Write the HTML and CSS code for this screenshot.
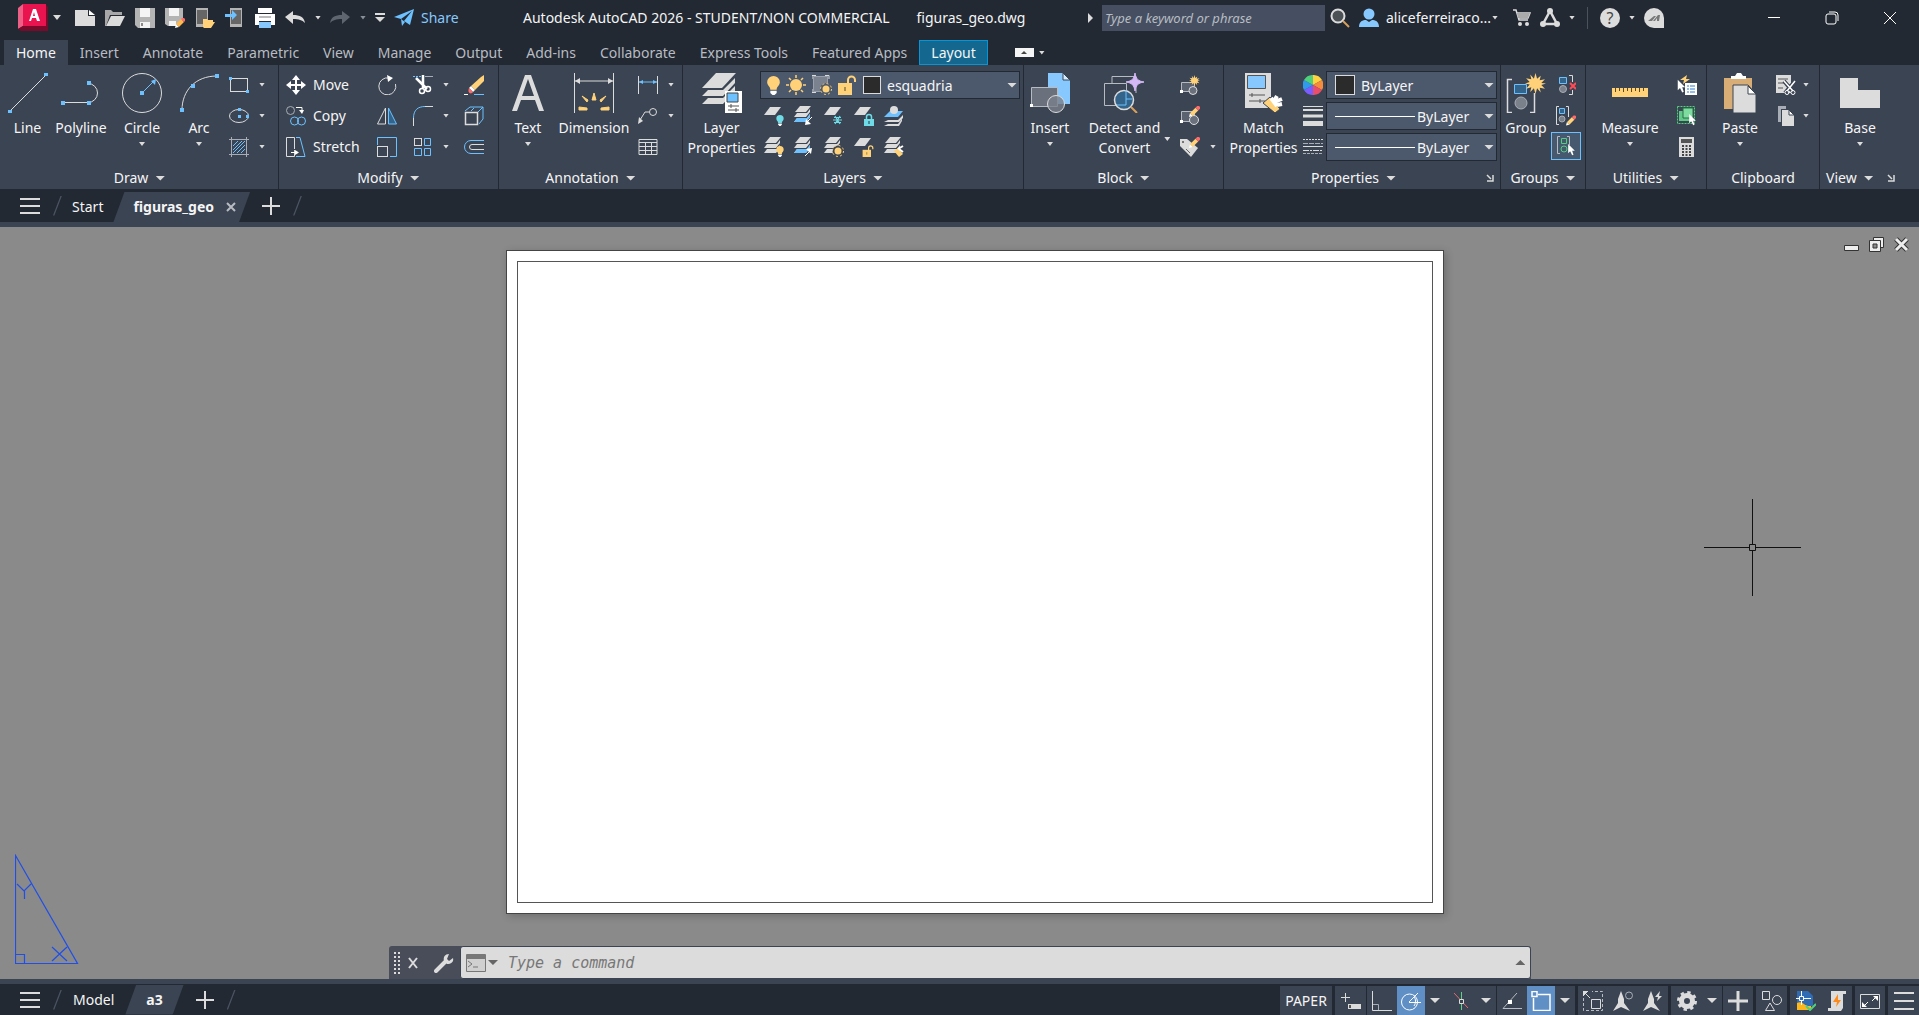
FILE: index.html
```html
<!DOCTYPE html>
<html lang="en">
<head>
    <meta charset="UTF-8">
    <meta name="viewport" content="width=device-width, initial-scale=1.0">
    <title>Autodesk AutoCAD 2026 - figuras_geo.dwg</title>
    <link rel="stylesheet" href="styles.css">
</head>
<body>
    <!-- Shared icon parts -->
    <svg class="sprite" width="0" height="0">
        <symbol id="sheet" viewBox="0 0 20 20"><path d="M6 1H17L11 9H0Z" fill="#dcdcdc"/></symbol>
        <symbol id="stack" viewBox="0 0 20 20">
            <path d="M6 0H17L12 6H1Z" fill="#dcdcdc"/>
            <path d="M3 7H13L16 3V6L12 11H0ZM3 12H13L16 8V11L12 16H0Z" fill="#dcdcdc"/>
        </symbol>
        <symbol id="bulb" viewBox="0 0 12 18">
            <path d="M6 0a6 6 0 0 1 6 6c0 3-3 4-3 7H3c0-3-3-4-3-7a6 6 0 0 1 6-6Z"/>
            <path d="M3 14h6v2l-2 2H5l-2-2Z" fill="#fff"/>
        </symbol>
        <symbol id="sun" viewBox="0 0 20 20">
            <circle cx="10" cy="10" r="6"/>
            <path d="M10 0v3M10 17v3M0 10h3M17 10h3M3 3l2 2M15 15l2 2M17 3l-2 2M5 15l-2 2" stroke="#ffd27a" stroke-width="1.5"/>
        </symbol>
        <symbol id="cursor" viewBox="0 0 12 18"><path d="M1 0v14l3-3 3 6 2-1-2-6h4Z" fill="#fff"/></symbol>
        <symbol id="pencil" viewBox="0 0 12 12"><path d="M0 12l1-4 3 3Z" fill="#fff"/><path d="M1 8l6-6 3 3-6 6Z" fill="#ffd27a"/><path d="M7 2l2-2h2l1 1v2l-2 2Z" fill="#ff6b6b"/></symbol>
        <symbol id="burst" viewBox="0 0 20 20"><path d="M10 0l1.500 5.500L15 2.500l-1 4.500 5-1-3.500 3.500L20 10l-4.500 1.500L19 15l-5-1 1 4.500-3.500-4L10 20l-1.500-5.500L5 18l1-4.500L1 15l3.500-4L0 10l4.500-1.500L1 5l5 1-1-4.500L8.500 5.500Z" fill="#ffd27a"/></symbol>
        <symbol id="openlock" viewBox="0 0 18 20"><path d="M10 9V5a3.500 3.500 0 0 1 7 0v2" fill="none" stroke="#ffd27a" stroke-width="2"/><path d="M0 8h14v12H0Z" fill="#ffd27a"/><path d="M7 12v4" stroke="#5a4a20" stroke-width="1"/></symbol>
        <symbol id="launcher" viewBox="0 0 8 8"><path d="M1 1l4 4M7 1v6H1" fill="none" stroke="#dcdcdc" stroke-width="1.500"/></symbol>
    </svg>

    <header class="titlebar">
        <button class="app-menu" aria-label="Application menu">
            <svg width="30" height="28" viewBox="0 0 30 28">
                <path d="M0 4L5 0V22L0 25Z" fill="#ec5f86"/><path d="M5 0H28V22H5Z" fill="#e8134f"/><path d="M0 25L5 22H28V1L30 3V27H3Z" fill="#7a0a2b"/>
                <path d="M11 17L15 5h3l4 12h-3l-1-3h-4l-1 3Zm4-5h2l-1-4Z" fill="#fff"/>
            </svg>
            <span class="caret caret-md"></span>
        </button>
        <div class="quick-access">
            <button aria-label="New"><svg class="icon" viewBox="0 0 20 20"><path d="M0 2H13V8H20V18H0Z" fill="#dcdcdc"/><path d="M14 2l6 5h-6Z" fill="#fff"/></svg></button>
            <button aria-label="Open"><svg class="icon" viewBox="0 0 20 20"><path d="M0 18V2h6l2 2h9v3H5L1 18Z" fill="#a8a8a8"/><path d="M6 8h14l-5 10H1Z" fill="#dcdcdc"/></svg></button>
            <button aria-label="Save"><svg class="icon" viewBox="0 0 20 20"><path d="M0 0h20v20H3l-3-3Z" fill="#b4b4b4"/><path d="M5 0h10v9H5ZM5 14h10v6H5Z" fill="#f4f4f4"/><path d="M7 15v3" stroke="#222" stroke-width="1"/></svg></button>
            <button aria-label="Save as"><svg class="icon" viewBox="0 0 20 20"><path d="M0 0h18v12l-6 6H3l-3-2Z" fill="#b4b4b4"/><path d="M4 0h10v8H4ZM4 13h7v5H4Z" fill="#f4f4f4"/><path d="M10 20l1-4 3 3Z" fill="#fff"/><path d="M11 16l5-5 3 3-5 5Z" fill="#ffb84d"/><path d="M16 11l1-1h2l1 1v2l-1 1Z" fill="#ff6b6b"/></svg></button>
            <button aria-label="Open from web and mobile"><svg class="icon" viewBox="0 0 20 20"><path d="M1 0h12v19H1Z" fill="#b4b4b4"/><path d="M2 2h10v14H2Z" fill="#666"/><path d="M8 19v-8h4l1 1h5v2l2 0-4 6H9Z" fill="#ffd27a"/></svg></button>
            <button aria-label="Save to web and mobile"><svg class="icon" viewBox="0 0 20 20"><path d="M5 0h12v19H5Z" fill="#b4b4b4"/><path d="M6 2h10v14H6Z" fill="#666"/><path d="M0 6h7V2l5 5-5 5V9H0Z" fill="#6dc1ff"/></svg></button>
            <button aria-label="Plot"><svg class="icon" viewBox="0 0 20 20"><path d="M3 0h14v5H3ZM0 6h20v11h-4v-4H4v4H0Z" fill="#fff"/><path d="M4 8h12v2H4Z" fill="#bbb"/><path d="M4 14h12v6H4Z" fill="#87c9ff"/></svg></button>
            <button aria-label="Undo"><svg class="icon" viewBox="0 0 20 20"><path d="M0 9l8-6v4c7 0 11 2 12 8-3-3-6-4-12-4v5Z" fill="#dcdcdc"/></svg></button>
            <span class="caret"></span>
            <button aria-label="Redo"><svg class="icon" viewBox="0 0 20 20"><path d="M20 9l-8-6v4C5 7 1 9 0 15c3-3 6-4 12-4v5Z" fill="#5f656e"/></svg></button>
            <span class="caret caret-dim"></span>
            <button aria-label="Customize"><svg width="10" height="10" viewBox="0 0 10 10"><path d="M0 1h10" stroke="#dcdcdc" stroke-width="2"/><path d="M0 4h10L5 9Z" fill="#dcdcdc"/></svg></button>
        </div>
        <button class="share">
            <svg class="icon" viewBox="0 0 20 20"><path d="M0 9L20 1 16 17 10 13 18 3 7 11Z" fill="#6dc1ff"/><path d="M7 11l1 7 3-4Z" fill="#6dc1ff"/></svg>
            Share
        </button>
        <div class="doc-title"><span>Autodesk AutoCAD 2026 - STUDENT/NON COMMERCIAL</span><span>figuras_geo.dwg</span></div>
        <div class="info-center">
            <svg width="5" height="10" viewBox="0 0 5 10"><path d="M0 0l5 5-5 5Z" fill="#dcdcdc"/></svg>
            <form class="search">
                <input type="text" aria-label="Search" placeholder="Type a keyword or phrase">
                <button type="button" aria-label="Find"><svg class="icon" viewBox="0 0 20 20"><circle cx="8" cy="8" r="6.500" fill="#4c5156" stroke="#dcdcdc" stroke-width="2"/><path d="M13 13l6 6" stroke="#d9a05a" stroke-width="2"/></svg></button>
            </form>
            <button class="account"><svg class="icon" viewBox="0 0 20 20"><circle cx="10" cy="6" r="5.500" fill="#87c9ff"/><path d="M0 19c0-6 4-7 7-7l3 2 3-2c3 0 7 1 7 7Z" fill="#87c9ff"/></svg><span>aliceferreiraco...</span><span class="caret"></span></button>
            <button aria-label="App Store"><svg width="18" height="18" viewBox="0 0 18 18"><path d="M0 1h3l3 10h9M4 4h13l-2 5H6" fill="none" stroke="#dcdcdc" stroke-width="1.500"/><path d="M4 4h13l-2 5H5Z" fill="#aaa"/><circle cx="7" cy="15" r="2" fill="#dcdcdc"/><circle cx="14" cy="15" r="2" fill="#dcdcdc"/></svg></button>
            <button class="with-caret" aria-label="Autodesk App"><svg class="icon" viewBox="0 0 20 20"><path d="M10 3L3 16H17Z" fill="none" stroke="#dcdcdc" stroke-width="2.500"/><circle cx="10" cy="3" r="3" fill="#dcdcdc"/><circle cx="3" cy="16" r="3" fill="#dcdcdc"/><circle cx="17" cy="16" r="3" fill="#dcdcdc"/></svg><span class="caret"></span></button>
            <span class="vline"></span>
            <button class="with-caret" aria-label="Help"><span class="help">?</span><span class="caret"></span></button>
            <button aria-label="Assistant"><svg class="icon" viewBox="0 0 20 20"><path d="M10 0a10 10 0 0 1 10 10V20H10A10 10 0 0 1 10 0Z" fill="#dcdcdc"/><path d="M4 13l6-5h2l-4 5ZM9 13l5-6h2l-1 6h-2v-3l-2 3Z" fill="#777"/></svg></button>
        </div>
        <div class="window-buttons">
            <button aria-label="Minimize"><svg width="14" height="14" viewBox="0 0 14 14"><path d="M1 6.500h12" stroke="#fff"/></svg></button>
            <button aria-label="Restore"><svg width="14" height="14" viewBox="0 0 14 14"><rect x="1" y="3" width="10" height="10" rx="2" fill="none" stroke="#fff"/><path d="M4 1h6a3 3 0 0 1 3 3v6" fill="none" stroke="#fff"/></svg></button>
            <button aria-label="Close"><svg width="14" height="14" viewBox="0 0 14 14"><path d="M1 1l12 12M13 1L1 13" stroke="#fff"/></svg></button>
        </div>
    </header>

    <nav class="ribbon-tabs">
        <button class="active">Home</button>
        <button>Insert</button>
        <button>Annotate</button>
        <button>Parametric</button>
        <button>View</button>
        <button>Manage</button>
        <button>Output</button>
        <button>Add-ins</button>
        <button>Collaborate</button>
        <button>Express Tools</button>
        <button>Featured Apps</button>
        <button class="contextual">Layout</button>
        <button class="ribbon-min" aria-label="Minimize ribbon"><svg width="19" height="9" viewBox="0 0 19 9"><path d="M0 0h19v9H0Z" fill="#f5f5f5"/><path d="M6 6l3-3 3 3Z" fill="#444"/></svg><span class="caret"></span></button>
    </nav>

    <main class="ribbon">
        <section class="panel draw">
            <div class="panel-body">
                <button class="big"><svg viewBox="0 0 40 40"><path d="M2 38L38 2" stroke="#dcdcdc"/><path d="M0 37h4v3H0ZM36 0h4v3h-4Z" fill="#6dc1ff"/></svg>Line</button>
                <button class="big"><svg viewBox="0 0 40 40"><path d="M2 29.500H27a9.500 9.500 0 0 0 0-19" fill="none" stroke="#dcdcdc"/><path d="M0 28h4v4H0ZM26 28h4v4h-4ZM26 8h4v4h-4Z" fill="#6dc1ff"/></svg>Polyline</button>
                <button class="big"><svg viewBox="0 0 40 40"><circle cx="20" cy="20" r="19.500" fill="none" stroke="#dcdcdc"/><path d="M20 20L32 8" stroke="#6dc1ff"/><path d="M18 18h4v4h-4ZM34 6l-1 6-4-4Z" fill="#6dc1ff"/></svg>Circle<span class="caret"></span></button>
                <button class="big"><svg viewBox="0 0 40 40"><path d="M3 37C3 18 16 3 38 3" fill="none" stroke="#dcdcdc"/><path d="M1 35h4v4H1ZM12 11h4v4h-4ZM36 1h4v4h-4Z" fill="#6dc1ff"/></svg>Arc<span class="caret"></span></button>
                <div class="rows">
                    <button class="tool" aria-label="Rectangle"><svg class="icon" viewBox="0 0 20 20"><rect x="1.500" y="3.500" width="17" height="13" fill="none" stroke="#dcdcdc"/><path d="M0 2h3v3H0ZM17 15h3v3h-3Z" fill="#6dc1ff"/></svg><span class="caret"></span></button>
                    <button class="tool" aria-label="Ellipse"><svg class="icon" viewBox="0 0 20 20"><ellipse cx="10" cy="10" rx="9.500" ry="6.500" fill="none" stroke="#dcdcdc"/><path d="M9 2h3v3H9ZM9 9h3v3H9ZM17 9h3v3h-3Z" fill="#6dc1ff"/></svg><span class="caret"></span></button>
                    <button class="tool" aria-label="Hatch"><svg class="icon" viewBox="0 0 20 20"><path d="M2.500 0v20M17.500 0v20M0 2.500h20M0 17.500h20" stroke="#a9aeb6"/><path d="M4 9l5-5M4 13l9-9M4 16L16 4M8 16l8-8M12 16l4-4" stroke="#6dc1ff"/></svg><span class="caret"></span></button>
                </div>
            </div>
            <h2>Draw <span class="caret caret-lg"></span></h2>
        </section>

        <section class="panel modify">
            <div class="panel-body">
                <div class="rows">
                    <button class="tool"><svg class="icon" viewBox="0 0 20 20"><path d="M10 0l4 5h-3v4h4V6l5 4-5 4v-3h-4v4h3l-4 5-4-5h3v-4H5v3L0 10l5-4v3h4V5H6Z" fill="#fff"/></svg>Move</button>
                    <button class="tool"><svg class="icon" viewBox="0 0 20 20"><circle cx="4.500" cy="4.500" r="4" fill="none" stroke="#a9aeb6"/><path d="M10 1.500h6V6" fill="none" stroke="#fff"/><path d="M13 4h5l-2 4Z" fill="#fff"/><circle cx="8.500" cy="15" r="4" fill="none" stroke="#6dc1ff"/><circle cx="15.500" cy="15" r="4" fill="none" stroke="#6dc1ff"/></svg>Copy</button>
                    <button class="tool"><svg class="icon" viewBox="0 0 20 20"><path d="M8.500 13v6.500h-8V.5h8V12" fill="none" stroke="#dcdcdc"/><path d="M10 .5h4L19 19.500H10" fill="none" stroke="#6dc1ff"/><path d="M5 15.500h6" stroke="#fff"/><path d="M9 13l4 2.500L9 18Z" fill="#fff"/></svg>Stretch</button>
                </div>
                <div class="rows">
                    <button class="tool" aria-label="Rotate"><svg class="icon" viewBox="0 0 20 20"><path d="M12 3A8.500 8.500 0 1 0 18.500 9" fill="none" stroke="#dcdcdc"/><path d="M10 0l6 3-5 4Z" fill="#fff"/></svg></button>
                    <button class="tool" aria-label="Mirror"><svg class="icon" viewBox="0 0 20 20"><path d="M8.500 2v16H.5Z" fill="none" stroke="#dcdcdc"/><path d="M11.500 2v16h8Z" fill="#35648a" stroke="#6dc1ff"/></svg></button>
                    <button class="tool" aria-label="Scale"><svg class="icon" viewBox="0 0 20 20"><path d="M.5 8V.5h19v19H13" fill="none" stroke="#6dc1ff"/><rect x=".5" y="9.500" width="10" height="10" fill="none" stroke="#dcdcdc"/></svg></button>
                </div>
                <div class="rows">
                    <button class="tool" aria-label="Trim"><svg class="icon" viewBox="0 0 20 20"><path d="M0 1.500h9" stroke="#6dc1ff" stroke-dasharray="2 1"/><path d="M12 1.500h8" stroke="#a9aeb6"/><path d="M3 3l11 11M10 0v13" stroke="#fff" stroke-width="2.500"/><circle cx="9" cy="16" r="2.500" fill="none" stroke="#fff" stroke-width="1.500"/><circle cx="15" cy="14" r="2.500" fill="none" stroke="#fff" stroke-width="1.500"/></svg><span class="caret"></span></button>
                    <button class="tool" aria-label="Fillet"><svg class="icon" viewBox="0 0 20 20"><path d="M.5 20v-8M12 .5h8" stroke="#dcdcdc"/><path d="M.5 12C.5 4 5 .5 12 .5" fill="none" stroke="#6dc1ff"/></svg><span class="caret"></span></button>
                    <button class="tool" aria-label="Array"><svg class="icon" viewBox="0 0 20 20"><rect x="1.500" y="1.500" width="7" height="7" fill="none" stroke="#dcdcdc"/><path d="M11.500 1.500h6v7h-6ZM1.500 11.500h7v7h-7ZM11.500 11.500h6v7h-6Z" fill="none" stroke="#6dc1ff"/></svg><span class="caret"></span></button>
                </div>
                <div class="rows">
                    <button class="tool" aria-label="Erase"><svg class="icon" viewBox="0 0 20 20"><path d="M0 19.500h4" stroke="#fff"/><path d="M10 19.500h10" stroke="#6dc1ff"/><path d="M17 2l3-2v6L11 15l-4-4Z" fill="#ffd27a"/><path d="M7 11l4 4-2 2-4-4Z" fill="#fff"/><path d="M5 13l4 4c-2 3-6 1-4-4Z" fill="#ff6b6b"/></svg></button>
                    <button class="tool" aria-label="Explode"><svg class="icon" viewBox="0 0 20 20"><path d="M1.500 6.500h12v12h-12Z" fill="none" stroke="#dcdcdc" stroke-width="1.500"/><path d="M1 5l5-4h13v12l-4 5M7 5l3-3M14 6l5-5" fill="none" stroke="#6dc1ff"/></svg></button>
                    <button class="tool" aria-label="Offset"><svg class="icon" viewBox="0 0 20 20"><path d="M20 3.500H7a6.500 6.500 0 0 0 0 13h13" fill="none" stroke="#6dc1ff"/><path d="M20 7.500H8a2.500 2.500 0 0 0 0 5h12" fill="none" stroke="#dcdcdc"/></svg></button>
                </div>
            </div>
            <h2>Modify <span class="caret caret-lg"></span></h2>
        </section>

        <section class="panel annotation">
            <div class="panel-body">
                <button class="big"><svg viewBox="0 0 40 40"><path d="M4 38L17 2h6l13 36h-5l-4-11H13L9 38Zm10-15h12L20 6Z" fill="#dcdcdc"/></svg>Text<span class="caret"></span></button>
                <button class="big"><svg viewBox="0 0 40 40"><path d="M.5 0v40M39.500 0v40M1 8h38" stroke="#dcdcdc"/><path d="M1 8l5-3v6ZM39 8l-5-3v6Z" fill="#dcdcdc"/><path d="M18 27l2-7 2 7ZM13 29l-5-6 6 4ZM27 29l5-6-6 4ZM5 34l8 1v2H5ZM35 34l-8 1v2h8Z" fill="#ffd27a" stroke="#ffd27a"/></svg>Dimension</button>
                <div class="rows">
                    <button class="tool" aria-label="Linear"><svg class="icon" viewBox="0 0 20 20"><path d="M.5 1v18M19.500 1v18" stroke="#dcdcdc"/><path d="M1 7h18" stroke="#6dc1ff"/><path d="M1 7l4-2v4ZM19 7l-4-2v4Z" fill="#6dc1ff"/></svg><span class="caret"></span></button>
                    <button class="tool" aria-label="Leader"><svg class="icon" viewBox="0 0 20 20"><circle cx="15" cy="6" r="3.500" fill="none" stroke="#dcdcdc"/><path d="M11 6H7L2 14" fill="none" stroke="#dcdcdc"/><path d="M0 18l1-7 4 4Z" fill="#dcdcdc"/></svg><span class="caret"></span></button>
                    <button class="tool" aria-label="Table"><svg class="icon" viewBox="0 0 20 20"><path d="M1 2.500h18v15H1ZM1 5.500h18M1 9.500h18M1 13.500h18M7.500 6v12M13.500 6v12" fill="none" stroke="#dcdcdc"/></svg></button>
                </div>
            </div>
            <h2>Annotation <span class="caret caret-lg"></span></h2>
        </section>

        <section class="panel layers">
            <div class="panel-body">
                <button class="big"><svg viewBox="0 0 40 40"><path d="M14 0H34L20 15H0Z" fill="#dcdcdc"/><path d="M6 17H21L33 5V10L21 23H0ZM6 25H21L33 13V18L21 31H0Z" fill="#dcdcdc"/><path d="M23 18h17v22H23Z" fill="#fff"/><path d="M25 20h11v9H25Z" fill="#6dc1ff" stroke="#444"/><path d="M26 33h11M26 37h11M29 31v4M34 35v4" stroke="#555"/></svg>Layer<br>Properties</button>
                <div class="layer-tools">
                    <div class="combo layer-combo">
                        <svg width="13" height="19"><use href="#bulb" fill="#ffd27a"/></svg>
                        <svg width="20" height="20"><use href="#sun" fill="#ffd27a"/></svg>
                        <svg class="icon" viewBox="0 0 20 20"><path d="M1.500 1.500h14v15h-14Z" fill="#7a828f" stroke="#9aa0aa"/><path d="M0 4V.5h4M13 .5h4V4M0 14v3.500h4" fill="none" stroke="#dcdcdc"/><circle cx="14" cy="14" r="6" fill="#4c586b"/><circle cx="14" cy="14" r="3.500" fill="#ffd27a"/><circle cx="14" cy="14" r="5.500" fill="none" stroke="#ffd27a" stroke-dasharray="2 2.300"/></svg>
                        <svg width="18" height="20"><use href="#openlock"/></svg>
                        <span class="swatch"></span>
                        <select aria-label="Layer"><option>esquadria</option></select>
                    </div>
                    <div class="layer-grid">
                        <button class="tool" aria-label="Layer off"><svg class="icon" viewBox="0 0 20 20"><use href="#sheet" width="20" height="20"/><use href="#bulb" x="12" y="9" width="8" height="11" fill="#6fdbe6"/></svg></button>
                        <button class="tool" aria-label="Isolate"><svg class="icon" viewBox="0 0 20 20"><use href="#stack" width="20" height="20"/><path d="M3 12h10l3-4v3l-4 5H0Z" fill="#6dc1ff"/><path d="M18 11l-5 5" stroke="#fff"/><path d="M11 19l1-6 5 5Z" fill="#fff"/></svg></button>
                        <button class="tool" aria-label="Freeze"><svg class="icon" viewBox="0 0 20 20"><use href="#sheet" width="20" height="20"/><path d="M9 14h9M11 10l5 8M16 10l-5 8M10 11.500h7M10 16.500h7" stroke="#6fdbe6" stroke-width="1.200"/></svg></button>
                        <button class="tool" aria-label="Lock"><svg class="icon" viewBox="0 0 20 20"><use href="#sheet" width="20" height="20"/><path d="M12.500 14v-3a2.500 2.500 0 0 1 5 0v3" fill="none" stroke="#6fdbe6" stroke-width="1.500"/><path d="M10 13h10v7H10Z" fill="#6fdbe6"/><path d="M15 15v3" stroke="#234"/></svg></button>
                        <button class="tool" aria-label="Make current"><svg class="icon" viewBox="0 0 20 20"><path d="M4 14h10l5-5v3l-4 4H0ZM4 18h10l4-5v2l-3 5H0Z" fill="#dcdcdc"/><path d="M6 5h13l-5 6H0Z" fill="#6dc1ff"/><circle cx="10" cy="4" r="4" fill="#dcdcdc"/></svg></button>
                        <button class="tool" aria-label="Turn all layers on"><svg class="icon" viewBox="0 0 20 20"><use href="#stack" width="20" height="20"/><use href="#bulb" x="12" y="9" width="8" height="11" fill="#ffd27a"/></svg></button>
                        <button class="tool" aria-label="Unisolate"><svg class="icon" viewBox="0 0 20 20"><use href="#stack" width="20" height="20"/><path d="M3 12h10l3-4v3l-4 5H0Z" fill="#6dc1ff"/><path d="M11 19l5-5" stroke="#fff"/><path d="M18 11l-1 6-5-5Z" fill="#fff"/></svg></button>
                        <button class="tool" aria-label="Thaw all"><svg class="icon" viewBox="0 0 20 20"><use href="#stack" width="20" height="20"/><circle cx="14" cy="14" r="5.500" fill="#3b4453" stroke="#ffd27a" stroke-dasharray="2 2.300"/><circle cx="14" cy="14" r="3.500" fill="#ffd27a"/></svg></button>
                        <button class="tool" aria-label="Unlock"><svg class="icon" viewBox="0 0 20 20"><use href="#sheet" width="20" height="20"/><use href="#openlock" x="8" y="8" width="12" height="12"/></svg></button>
                        <button class="tool" aria-label="Match layer"><svg class="icon" viewBox="0 0 20 20"><use href="#stack" width="20" height="20"/><path d="M10 14l4-3 5 6-4 3Z" fill="#ffd27a"/><path d="M14 12l5-3M15 12l4 3" stroke="#fff" stroke-width="2"/></svg></button>
                    </div>
                </div>
            </div>
            <h2>Layers <span class="caret caret-lg"></span></h2>
        </section>

        <section class="panel block">
            <div class="panel-body">
                <button class="big"><svg viewBox="0 0 40 40"><path d="M18 0H33L40 7V31H18Z" fill="#87c9ff"/><path d="M33 0v7h7Z" fill="#d5ecff" stroke="#3b4453"/><path d="M1.500 14.500h26v19h-26Z" fill="#6b717c" stroke="#b8bcc2"/><circle cx="26" cy="31" r="8.500" fill="#7b818b" fill-opacity=".8" stroke="#dcdcdc"/><path d="M0 31h3v3H0Z" fill="#fff"/></svg>Insert<span class="caret"></span></button>
                <button class="big detect"><svg viewBox="0 0 40 40"><path d="M8 10V3.500h24V20" fill="none" stroke="#b8bcc2"/><path d="M.5 10.500h22v22H.5Z" fill="#3b4453" stroke="#b8bcc2"/><circle cx="20" cy="27" r="9.500" fill="#35648a" stroke="#dcdcdc" stroke-width="1.500"/><path d="M22 17v15h-9M22 26h6" fill="none" stroke="#6dc1ff"/><path d="M27 34l6 6" stroke="#d9a05a" stroke-width="2"/><path d="M31 0c1 6 3 8 9 9-6 1-8 3-9 9-1-6-3-8-9-9 6-1 8-3 9-9Z" fill="#d4b8f5" stroke="#d4b8f5"/></svg>Detect and<br>Convert<span class="caret"></span></button>
                <div class="rows">
                    <button class="tool" aria-label="Create block"><svg class="icon" viewBox="0 0 20 20"><path d="M1.500 7.500h13v9h-13Z" fill="#5b6270" stroke="#b8bcc2"/><circle cx="13" cy="15.500" r="4" fill="#6b717c" stroke="#dcdcdc"/><use href="#burst" x="9" y="0" width="11" height="11"/><path d="M0 15h3v3H0Z" fill="#fff"/></svg></button>
                    <button class="tool" aria-label="Edit block"><svg class="icon" viewBox="0 0 20 20"><path d="M1.500 5.500h13v10h-13Z" fill="#5b6270" stroke="#b8bcc2"/><circle cx="14" cy="14" r="4.500" fill="#6b717c" stroke="#dcdcdc"/><use href="#pencil" x="9" y="0" width="11" height="11"/><path d="M0 14h3v3H0Z" fill="#fff"/></svg></button>
                    <button class="tool" aria-label="Edit attributes"><svg class="icon" viewBox="0 0 20 20"><path d="M0 2h7l11 9-7 9L0 9Z" fill="#dcdcdc"/><path d="M6 12l4 4" stroke="#666"/><circle cx="3" cy="5" r="1" fill="#555"/><use href="#pencil" x="9" y="0" width="11" height="11"/></svg><span class="caret"></span></button>
                </div>
            </div>
            <h2>Block <span class="caret caret-lg"></span></h2>
        </section>

        <section class="panel properties">
            <div class="panel-body">
                <button class="big"><svg viewBox="0 0 40 40"><path d="M1 0h26v35H1Z" fill="#dcdcdc"/><path d="M3.500 2.500h18v13h-18Z" fill="#87c9ff" stroke="#555"/><path d="M5 22h16M5 28h16M8 20v4M16 26v4" stroke="#555"/><path d="M19 30l7-6 10 12-5 4Z" fill="#ffd27a" stroke="#3b4453"/><path d="M27 25l6 8M30 28l3-5M30 29l8-3M33 32l5-1" stroke="#fff" stroke-width="4"/></svg>Match<br>Properties</button>
                <div class="prop-rows">
                    <svg class="icon" viewBox="0 0 20 20"><path d="M10 10V0a10 10 0 0 1 9 5Z" fill="#ffd23f"/><path d="M10 10l9-5a10 10 0 0 1 0 10Z" fill="#f58b3c"/><path d="M10 10l9 5a10 10 0 0 1-9 5Z" fill="#e84e6a"/><path d="M10 10v10a10 10 0 0 1-9-5Z" fill="#7b5cff"/><path d="M10 10L1 15A10 10 0 0 1 1 5Z" fill="#2f9bea"/><path d="M10 10L1 5a10 10 0 0 1 9-5Z" fill="#4fd17c"/></svg>
                    <div class="combo color-combo"><span class="swatch"></span><select aria-label="Object color"><option>ByLayer</option></select></div>
                    <svg class="icon" viewBox="0 0 20 20"><path d="M0 .5h20" stroke="#dcdcdc"/><path d="M0 4h20" stroke="#dcdcdc" stroke-width="2"/><path d="M0 10h20" stroke="#dcdcdc" stroke-width="3"/><path d="M0 17.500h20" stroke="#dcdcdc" stroke-width="5"/></svg>
                    <div class="combo line-combo"><span class="sample"></span><select aria-label="Lineweight"><option>ByLayer</option></select></div>
                    <svg class="icon" viewBox="0 0 20 20"><path d="M0 2.500h20" stroke="#dcdcdc" stroke-dasharray="2 1"/><path d="M0 6.500h20" stroke="#a9aeb6" stroke-dasharray="5 1"/><path d="M0 9.500h20" stroke="#dcdcdc"/><path d="M0 13.500h20" stroke="#dcdcdc" stroke-dasharray="6 1 2 1"/><path d="M0 16.500h20" stroke="#a9aeb6" stroke-dasharray="3 1"/></svg>
                    <div class="combo line-combo"><span class="sample"></span><select aria-label="Linetype"><option>ByLayer</option></select></div>
                </div>
            </div>
            <h2>Properties <span class="caret caret-lg"></span><svg class="launcher" width="8" height="8"><use href="#launcher"/></svg></h2>
        </section>

        <section class="panel groups">
            <div class="panel-body">
                <button class="big"><svg viewBox="0 0 40 40"><path d="M6 6.500H1.500v33H6M24 39.500h4.500V20" fill="none" stroke="#dcdcdc" stroke-width="1.500"/><path d="M8.500 11.500h12v9h-12Z" fill="#35648a" stroke="#6dc1ff"/><circle cx="15" cy="30" r="6" fill="#7b818b" stroke="#a9aeb6"/><use href="#burst" x="19" y="0" width="21" height="21"/></svg>Group</button>
                <div class="rows">
                    <button class="tool" aria-label="Ungroup"><svg class="icon" viewBox="0 0 20 20"><path d="M3.500 2.500h7v6h-7Z" fill="#35648a" stroke="#6dc1ff"/><circle cx="7" cy="14" r="3.500" fill="#7b818b" stroke="#a9aeb6"/><path d="M13 .5h3.500V7M16.500 15v4.500H13" fill="none" stroke="#dcdcdc"/><path d="M14 8l6 6M20 8l-6 6" stroke="#ff4b55" stroke-width="2"/></svg></button>
                    <button class="tool" aria-label="Group edit"><svg class="icon" viewBox="0 0 20 20"><path d="M3 .5H.5v18H3M10 .5h2.500V11" fill="none" stroke="#dcdcdc"/><path d="M3.500 2.500h5v5h-5Z" fill="#35648a" stroke="#6dc1ff"/><circle cx="6" cy="13" r="3" fill="#7b818b" stroke="#a9aeb6"/><use href="#pencil" x="10" y="9" width="10" height="11"/></svg></button>
                    <button class="tool pressed" aria-label="Group selection"><svg class="icon" viewBox="0 0 20 20"><path d="M4 .5H1.500v17H4M11 .5h2.500V9" fill="none" stroke="#b8bcc2"/><path d="M5.500 2.500h5v5h-5Z" fill="none" stroke="#4fd17c"/><circle cx="8" cy="13" r="3" fill="none" stroke="#4fd17c"/><use href="#cursor" x="11" y="8" width="9" height="12"/></svg></button>
                </div>
            </div>
            <h2>Groups <span class="caret caret-lg"></span></h2>
        </section>

        <section class="panel utilities">
            <div class="panel-body">
                <button class="big"><svg viewBox="0 0 40 40"><path d="M2 15h36v9H2Z" fill="#ffd27a"/><path d="M5.500 15v4M9.500 15v3M13.500 15v4M17.500 15v3M21.500 15v4M25.500 15v3M29.500 15v4M33.500 15v3" stroke="#5a4a20"/></svg>Measure<span class="caret"></span></button>
                <div class="rows">
                    <button class="tool" aria-label="Quick select"><svg class="icon" viewBox="0 0 20 20"><path d="M10 0L3 5h4l-1 4 7-5H9Z" fill="#ffd27a"/><path d="M8 8h12v12H8Z" fill="#fff"/><path d="M10 11h2M10 14h2M10 17h2M13 11h5M13 14h5M13 17h5" stroke="#2b7fd0"/><use href="#cursor" x="0" y="4" width="9" height="15"/></svg></button>
                    <button class="tool" aria-label="Select all"><svg class="icon" viewBox="0 0 20 20"><path d="M.5.500h17v17H.5Z" fill="none" stroke="#4fd17c" stroke-dasharray="2 1"/><path d="M2 5h11v10H2Z" fill="#5fc987"/><path d="M6 2h10v10H6Z" fill="#7fdca0" stroke="#2a6a45"/><use href="#cursor" x="11" y="8" width="9" height="12"/></svg></button>
                    <button class="tool" aria-label="Quick calculator"><svg class="icon" viewBox="0 0 20 20"><path d="M2 0h15v20H2Z" fill="#dcdcdc"/><path d="M4 2h11v4H4Z" fill="#555"/><path d="M5 9h9M5 12h9M5 15h9M5 18h9" stroke="#444" stroke-width="2" stroke-dasharray="2 1.500"/></svg></button>
                </div>
            </div>
            <h2>Utilities <span class="caret caret-lg"></span></h2>
        </section>

        <section class="panel clipboard">
            <div class="panel-body">
                <button class="big"><svg viewBox="0 0 40 40"><path d="M4 5h28v31H4Z" fill="#d9ae76"/><path d="M11 6V3h4l2-3h4l2 3h3v3Z" fill="#fff"/><path d="M13 12h15l8 9v19H13Z" fill="#dcdcdc" stroke="#3b4453"/><path d="M28 13v8h8Z" fill="#fff" stroke="#3b4453"/></svg>Paste<span class="caret"></span></button>
                <div class="rows">
                    <button class="tool" aria-label="Cut"><svg class="icon" viewBox="0 0 20 20"><path d="M0 0h15v18H0Z" fill="#dcdcdc"/><path d="M2 4h10M2 8h6M2 13h5" stroke="#555"/><path d="M8 6l10 12M19 6L9 18" stroke="#3b4453" stroke-width="4"/><path d="M8 6l9 10M19 6l-8 10" stroke="#fff" stroke-width="1.500"/><circle cx="11" cy="17.500" r="2" fill="none" stroke="#fff"/><circle cx="17" cy="17.500" r="2" fill="none" stroke="#fff"/></svg><span class="caret"></span></button>
                    <button class="tool" aria-label="Copy clip"><svg class="icon" viewBox="0 0 20 20"><path d="M2 0h8v3H5v13H2Z" fill="#a9aeb6"/><path d="M6 4h7l5 5v11H6Z" fill="#dcdcdc"/><path d="M13 4v5h5Z" fill="#fff" stroke="#3b4453"/></svg><span class="caret"></span></button>
                </div>
            </div>
            <h2>Clipboard</h2>
        </section>

        <section class="panel view">
            <div class="panel-body">
                <button class="big"><svg viewBox="0 0 40 40"><path d="M0 5h18v12h22v18H0Z" fill="#dcdcdc"/></svg>Base<span class="caret"></span></button>
            </div>
            <h2>View <span class="caret caret-lg"></span><svg class="launcher" width="8" height="8"><use href="#launcher"/></svg></h2>
        </section>
    </main>

    <nav class="strip file-tabs">
        <button class="burger" aria-label="File tab menu"><svg width="20" height="16" viewBox="0 0 20 16"><path d="M0 1h20M0 8h20M0 15h20" stroke="#dcdcdc" stroke-width="2"/></svg></button>
        <span class="slash"></span>
        <button class="strip-tab">Start</button>
        <button class="strip-tab current">figuras_geo <svg width="10" height="10" viewBox="0 0 10 10"><path d="M1 1l8 8M9 1L1 9" stroke="#b8bcc2" stroke-width="2"/></svg></button>
        <button class="plus" aria-label="New tab"><svg width="18" height="18" viewBox="0 0 18 18"><path d="M9 0v18M0 9h18" stroke="#dcdcdc" stroke-width="2"/></svg></button>
        <span class="slash"></span>
    </nav>

    <div class="canvas">
        <div class="paper"><div class="frame"></div></div>
        <svg class="crosshair" width="97" height="97" viewBox="0 0 97 97"><path d="M48.500 0v45M48.500 52v45M0 48.500h45M52 48.500h45M45.500 45.500h6v6h-6Z" fill="none" stroke="#111"/></svg>
        <svg class="ucs" width="64" height="112" viewBox="0 0 64 112"><path d="M.5 1.500v108h62ZM.5 100.500h9v9M2 30l7 7 7-7M9.500 37v8M37 93l15 14M52 93l-15 14" fill="none" stroke="#1f4fe8" stroke-width="1.200"/></svg>
        <div class="doc-buttons">
            <button aria-label="Minimize drawing"><svg width="15" height="15" viewBox="0 0 15 15"><path d="M.5 8.500h14v5H.5Z" fill="#eee" stroke="#333"/></svg></button>
            <button aria-label="Restore drawing"><svg width="15" height="15" viewBox="0 0 15 15"><path d="M4.500.500h10v10h-10Z" fill="#eee" stroke="#333"/><path d="M.5 3.500h11v11H.5Z" fill="#eee" stroke="#333"/><path d="M4 7h4v4H4Z" fill="#8a8a8a" stroke="#333"/></svg></button>
            <button aria-label="Close drawing"><svg width="15" height="15" viewBox="0 0 15 15"><path d="M2 2l11 11M13 2L2 13" stroke="#333" stroke-width="5"/><path d="M2 2l11 11M13 2L2 13" stroke="#eee" stroke-width="3"/></svg></button>
        </div>
        <div class="command-line">
            <span class="grip"></span>
            <button aria-label="Close command line"><svg width="10" height="12" viewBox="0 0 10 12"><path d="M1 1l8 10M9 1L1 11" stroke="#dcdcdc" stroke-width="2"/></svg></button>
            <button aria-label="Customize command line"><svg class="icon" viewBox="0 0 20 20"><path d="M2 18L11 9" stroke="#dcdcdc" stroke-width="4" stroke-linecap="round"/><path d="M15 1c-4 0-6 3-5 7l3 3c4 0 7-2 6-6l-4 3-2-2Z" fill="#dcdcdc"/></svg></button>
            <div class="command-box">
                <svg width="20" height="18" viewBox="0 0 20 18"><path d="M.5.500h19v17H.5Z" fill="#d0d0d0" stroke="#777"/><path d="M1 1h18v4H1Z" fill="#777"/><path d="M2 7l4 3-4 3M7 13h5" fill="none" stroke="#777"/></svg>
                <span class="caret caret-lg caret-dark"></span>
                <input type="text" aria-label="Command" placeholder="Type a command">
                <span class="history"></span>
            </div>
        </div>
    </div>

    <footer class="strip status-bar">
        <button class="burger" aria-label="Layout menu"><svg width="20" height="16" viewBox="0 0 20 16"><path d="M0 1h20M0 8h20M0 15h20" stroke="#dcdcdc" stroke-width="2"/></svg></button>
        <span class="slash"></span>
        <button class="strip-tab">Model</button>
        <button class="strip-tab current">a3</button>
        <button class="plus" aria-label="New layout"><svg width="18" height="18" viewBox="0 0 18 18"><path d="M9 0v18M0 9h18" stroke="#dcdcdc" stroke-width="2"/></svg></button>
        <span class="slash"></span>
        <div class="status-tools">
            <div class="seg"><button class="space">PAPER</button></div>
            <div class="seg">
                <button aria-label="Dynamic input"><svg class="icon" viewBox="0 0 20 20"><path d="M4.500 2v9M0 6.500h9" stroke="#dcdcdc"/><path d="M7 13h13v5H7Z" fill="#dcdcdc"/><path d="M8 14h2v3H8Z" fill="#555"/></svg></button>
                <button class="divided" aria-label="Ortho"><svg class="icon" viewBox="0 0 20 20"><path d="M.5 0v19.500H20" fill="none" stroke="#dcdcdc"/><path d="M1 13.500h5.500V19" fill="none" stroke="#a9aeb6"/></svg></button>
                <button class="on" aria-label="Polar tracking"><svg class="icon" viewBox="0 0 20 20"><circle cx="8.500" cy="11" r="8" fill="none" stroke="#fff"/><path d="M8 11.500h12M8 11L17 2M13 6c2 2 2 6 0 9" fill="none" stroke="#fff"/></svg></button>
                <button class="drop" aria-label="Polar options"><span class="caret caret-lg"></span></button>
                <button aria-label="Isometric drafting"><svg class="icon" viewBox="0 0 20 20"><path d="M10.500 1v18" stroke="#5fd08a"/><path d="M3 2l14 15" stroke="#e06a6a"/><path d="M8.500 8.500h4v4h-4Z" fill="#3b4453" stroke="#dcdcdc"/></svg></button>
                <button class="drop" aria-label="Isometric options"><span class="caret caret-lg"></span></button>
                <button class="divided" aria-label="Object snap tracking"><svg class="icon" viewBox="0 0 20 20"><path d="M15 2L1 17.500h19" fill="none" stroke="#b8bcc2"/><path d="M6 9h4v4H6Z" fill="#fff"/></svg></button>
                <button class="on" aria-label="Object snap"><svg class="icon" viewBox="0 0 20 20"><path d="M7 3.500h12v16H2.500V7M1 .5h5v5H1Z" fill="none" stroke="#fff" stroke-width="1.500"/></svg></button>
                <button class="drop" aria-label="Snap options"><span class="caret caret-lg"></span></button>
            </div>
            <div class="seg tight">
                <button aria-label="Annotation scale"><svg class="icon" viewBox="0 0 20 20"><path d="M.5 7v12.500h19V.5H9" fill="none" stroke="#b8bcc2" stroke-dasharray="3 2"/><path d="M8.500 8.500h9v9h-9Z" fill="none" stroke="#dcdcdc"/><path d="M0 0h5L0 5ZM2 2l5 5" fill="#dcdcdc" stroke="#dcdcdc"/></svg></button>
                <button aria-label="Annotation visibility"><svg class="icon" viewBox="0 0 20 20"><path d="M8 0l3 8v4l6 8-9-4-8 4 5-8V8Z" fill="#dcdcdc"/><circle cx="16" cy="4.500" r="3.500" fill="none" stroke="#a9aeb6"/></svg></button>
                <button aria-label="Auto scale"><svg class="icon" viewBox="0 0 20 20"><path d="M8 0l3 8v4l6 8-9-4-8 4 5-8V8Z" fill="#dcdcdc"/><path d="M17 0l-5 6h3l-1 4 5-5h-3Z" fill="#dcdcdc"/></svg></button>
            </div>
            <div class="seg">
                <button aria-label="Workspace"><svg class="icon" viewBox="0 0 20 20"><circle cx="10" cy="10" r="5.500" fill="none" stroke="#dcdcdc" stroke-width="5"/><circle cx="10" cy="10" r="8.500" fill="none" stroke="#dcdcdc" stroke-width="3" stroke-dasharray="3.300 3.375"/></svg></button>
                <button class="drop" aria-label="Workspace options"><span class="caret caret-lg"></span></button>
                <button class="divided" aria-label="Annotation monitor"><svg class="icon" viewBox="0 0 20 20"><path d="M10 0v20M0 10h20" stroke="#dcdcdc" stroke-width="3"/></svg></button>
            </div>
            <div class="seg"><button aria-label="Isolate objects"><svg class="icon" viewBox="0 0 20 20"><path d="M.5.500h7v8h-7ZM8 12l4.500 7.500h-9Z" fill="none" stroke="#dcdcdc"/><circle cx="15" cy="9" r="4.500" fill="none" stroke="#dcdcdc"/></svg></button></div>
            <div class="seg">
                <button aria-label="Sync"><svg class="icon" viewBox="0 0 20 20"><path d="M1 0h11l5 5v10H1Z" fill="#2f6cb3"/><path d="M1 12c6-3 7 4 14 3v4H1Z" fill="#ffb81c"/><path d="M3.500 5.500h4v4h-4ZM5.500 0v5M5.500 10v4M0 7.500h3M8 7.500h7" fill="none" stroke="#fff"/><path d="M10 15l4 4 6-6" fill="none" stroke="#4fd17c" stroke-width="2"/></svg></button>
                <button aria-label="Activity"><svg class="icon" viewBox="0 0 20 20"><path d="M4 0h15v3h-3v14l-2 3H1v-3h3Z" fill="#dcdcdc"/><path d="M11 3L6 11h4l-1 5 5-7h-3Z" fill="#ff8a1c"/></svg></button>
            </div>
            <div class="seg tight"><button aria-label="Clean screen"><svg class="icon" viewBox="0 0 20 20"><path d="M.5 3.500h19v14H.5Z" fill="none" stroke="#dcdcdc"/><path d="M13 5h5v5ZM2 11v5h5Z" fill="#fff"/><path d="M12 10l4-4M4 15l4-4" stroke="#fff"/></svg></button></div>
            <div class="seg"><button aria-label="Customization"><svg class="icon" viewBox="0 0 20 20"><path d="M0 2h20M0 10h20M0 18h20" stroke="#dcdcdc" stroke-width="2"/></svg></button></div>
        </div>
    </footer>
</body>
</html>
```

FILE: styles.css
```css
* {
    box-sizing: border-box;
}
body {
    margin: 0;
    height: 100vh;
    display: flex;
    flex-direction: column;
    overflow: hidden;
    background-color: #222933;
    color: #f5f5f5;
    font-family: "Noto Sans", "Open Sans", sans-serif;
    font-size: 14px;
    line-height: 20px;
}
button {
    background: none;
    border: none;
    padding: 0;
    color: inherit;
    font: inherit;
    white-space: nowrap;
}
svg {
    display: block;
    flex: none;
}
.sprite {
    position: absolute;
}
.icon {
    width: 20px;
    height: 20px;
}
.caret {
    flex: none;
    width: 6px;
    height: 4px;
    background-color: #dcdcdc;
    clip-path: polygon(0 0, 100% 0, 50% 100%);
}
.caret-md {
    width: 8px;
    height: 5px;
}
.caret-lg {
    width: 10px;
    height: 5px;
}
.caret-dim {
    background-color: #8a8f97;
}
.caret-dark {
    background-color: #666;
}

/* Title bar */
.titlebar {
    display: flex;
    align-items: center;
    height: 40px;
    padding: 0 0 5px 18px;
    flex: none;
}
.app-menu {
    display: flex;
    align-items: center;
    gap: 5px;
    width: 57px;
}
.quick-access {
    display: flex;
    align-items: center;
    gap: 10px;
}
.quick-access .caret {
    margin-right: -1px;
}
.share {
    display: flex;
    align-items: center;
    gap: 7px;
    width: 129px;
    margin-left: 9px;
    color: #87c9ff;
}
.doc-title {
    display: flex;
    gap: 27px;
    white-space: nowrap;
}
.info-center {
    display: flex;
    align-items: center;
    gap: 9px;
    margin-left: auto;
}
.search {
    display: flex;
    align-items: center;
    gap: 5px;
}
.search input {
    width: 223px;
    height: 26px;
    padding: 0 3px;
    border: none;
    background-color: #454f61;
    color: #f5f5f5;
    font: italic 13px "Noto Sans", sans-serif;
}
.search input::placeholder {
    color: #b8bcc2;
}
.account {
    display: flex;
    align-items: center;
    width: 145px;
    gap: 7px;
}
.account .caret {
    margin-left: -6px;
}
.with-caret {
    display: flex;
    align-items: center;
    gap: 9px;
}
.vline {
    width: 1px;
    height: 22px;
    margin: 0 3px;
    background-color: #4b525c;
}
.help {
    width: 20px;
    height: 20px;
    border-radius: 50%;
    background-color: #dcdcdc;
    color: #444;
    font-size: 16px;
}
.window-buttons {
    display: flex;
    margin-left: 81px;
}
.window-buttons button {
    display: flex;
    justify-content: center;
    align-items: center;
    width: 58px;
    height: 34px;
}

/* Ribbon tabs */
.ribbon-tabs {
    display: flex;
    flex: none;
    height: 25px;
    padding-left: 4px;
    color: #b8bcc2;
}
.ribbon-tabs button {
    padding: 0 11px;
    border: 1px solid transparent;
    line-height: 23px;
}
.ribbon-tabs .active {
    background-color: #3b4453;
    color: #f5f5f5;
}
.ribbon-tabs .contextual {
    background-color: #14688f;
    border-color: #0696d7;
    color: #f5f5f5;
}
.ribbon-tabs .ribbon-min {
    display: flex;
    align-items: center;
    gap: 5px;
    padding-left: 26px;
}

/* Ribbon panels */
.ribbon {
    display: flex;
    flex: none;
    height: 124px;
    padding-left: 1px;
    background-color: #3b4453;
}
.panel {
    display: flex;
    flex-direction: column;
    flex: none;
    border-right: 1px solid #222933;
}
.panel-body {
    display: grid;
    flex: 1;
    align-items: start;
}
.panel h2 {
    display: flex;
    justify-content: center;
    align-items: center;
    gap: 7px;
    height: 22px;
    margin: 0;
    font-size: 14px;
    font-weight: normal;
    line-height: 22px;
}
.launcher {
    margin-right: 6px;
}
.properties h2 {
    padding-left: 87px;
}
.properties .launcher {
    margin-left: auto;
}
.draw { width: 278px; }
.draw .panel-body { grid-template-columns: 53px 54px 68px 46px 1fr; }
.modify { width: 220px; }
.modify .panel-body { grid-template-columns: 91px 36px 51px 1fr; padding-left: 7px; }
.annotation { width: 184px; }
.annotation .panel-body { grid-template-columns: 58px 74px 1fr; }
.layers { width: 341px; }
.layers .panel-body { grid-template-columns: 77px 1fr; padding-right: 3px; }
.block { width: 200px; }
.block .panel-body { grid-template-columns: 52px 97px 1fr; }
.properties { width: 277px; }
.properties .panel-body { grid-template-columns: 79px 1fr; }
.groups { width: 85px; }
.groups .panel-body { grid-template-columns: 50px 1fr; }
.utilities { width: 121px; }
.utilities .panel-body { grid-template-columns: 88px 1fr; }
.clipboard { width: 113px; }
.clipboard .panel-body { grid-template-columns: 66px 1fr; }
.view { flex: 1; border-right: none; }
.view .panel-body { grid-template-columns: 80px; }
.view h2 { justify-content: flex-start; padding-left: 6px; }
.view .launcher { margin-left: 6px; }

.big {
    display: flex;
    flex-direction: column;
    align-items: center;
    justify-self: center;
    padding-top: 8px;
    text-align: center;
}
.big svg {
    width: 40px;
    height: 40px;
    margin-bottom: 5px;
}
.big .caret {
    margin-top: 4px;
}
.detect {
    position: relative;
}
.detect .caret {
    position: absolute;
    right: -10px;
    bottom: 17px;
}
.rows {
    display: grid;
    grid-auto-rows: 31px;
    padding-top: 4px;
}
.tool {
    display: flex;
    align-items: center;
    gap: 7px;
}
.tool .caret {
    margin-left: 3px;
}
.draw .rows,
.annotation .rows,
.block .rows {
    padding-left: 7px;
}
.clipboard .rows {
    padding-left: 3px;
}
.clipboard .tool {
    gap: 4px;
}
.groups .tool {
    justify-content: center;
    width: 30px;
    border: 1px solid transparent;
}
.groups .tool.pressed {
    height: 28px;
    margin-top: 1px;
    background-color: #46596f;
    border-color: #6dc1ff;
}
.utilities .rows {
    padding-left: 3px;
}

/* Combos */
.combo {
    display: flex;
    align-items: center;
    position: relative;
    height: 28px;
    background-color: #4c586b;
    border: 1px solid #222933;
}
.combo select {
    flex: 1;
    min-width: 0;
    height: 26px;
    padding: 2px 0 0;
    border: none;
    background: none;
    color: #f5f5f5;
    font: inherit;
    appearance: none;
}
.combo::after {
    content: "";
    position: absolute;
    right: 2px;
    width: 10px;
    height: 5px;
    background-color: #dcdcdc;
    clip-path: polygon(0 0, 100% 0, 50% 100%);
    pointer-events: none;
}
.swatch {
    width: 20px;
    height: 20px;
    border: 1px solid #dcdcdc;
    background-color: #2b2b2b;
}
.layer-tools {
    padding-top: 6px;
}
.layer-combo {
    gap: 6px;
    padding-left: 6px;
}
.layer-combo .swatch {
    width: 18px;
    height: 18px;
    margin-left: 1px;
}
.layer-grid {
    display: grid;
    grid-template-columns: repeat(5, 30px);
    grid-auto-rows: 31px;
    padding: 1px 0 0 4px;
}
.prop-rows {
    display: grid;
    grid-template-columns: 20px 171px;
    column-gap: 3px;
    row-gap: 3px;
    align-items: center;
    padding-top: 6px;
}
.color-combo {
    gap: 6px;
    padding-left: 8px;
}
.line-combo {
    gap: 2px;
    padding-left: 8px;
}
.sample {
    width: 80px;
    height: 1px;
    background-color: #fff;
}

/* File tabs and layout tabs */
.strip {
    display: flex;
    flex: none;
    align-items: center;
    padding-left: 20px;
}
.file-tabs {
    height: 38px;
    border-bottom: 5px solid #3b4453;
}
.status-bar {
    height: 36px;
    border-top: 5px solid #3b4453;
}
.slash {
    width: 9px;
    height: 20px;
    margin-left: 13px;
    background-color: #4b5463;
    clip-path: polygon(85% 0, 100% 0, 15% 100%, 0 100%);
}
.strip-tab {
    height: 30px;
    padding: 0 10px;
    align-self: flex-end;
}
.strip-tab.current {
    display: flex;
    align-items: center;
    gap: 12px;
    padding: 0 14px 0 20px;
    background-color: #3b4453;
    clip-path: polygon(11px 0, 100% 0, calc(100% - 11px) 100%, 0 100%);
    font-weight: bold;
}
.status-bar .strip-tab {
    align-self: center;
    padding: 0 11px;
}
.status-bar .strip-tab.current {
    padding: 0 21px;
}
.plus {
    margin-left: 12px;
}

/* Drawing area */
.canvas {
    position: relative;
    flex: 1;
    min-height: 0;
    background-color: #8a8a8a;
}
.paper {
    position: absolute;
    left: 26.36%;
    top: 23px;
    width: 48.9%;
    bottom: 65px;
    padding: 10px;
    background-color: #fff;
    border: 1px solid #444;
    box-shadow: 2px 2px 8px rgba(0,0,0,0.2);
}
.frame {
    height: 100%;
    border: 1px solid #555;
}
.crosshair {
    position: absolute;
    left: 1704px;
    top: 272px;
}
.ucs {
    position: absolute;
    left: 15px;
    bottom: 13px;
}
.doc-buttons {
    position: absolute;
    top: 10px;
    right: 10px;
    display: flex;
    gap: 10px;
}
.command-line {
    position: absolute;
    bottom: 0;
    left: 20.27%;
    right: 20.2%;
    display: flex;
    align-items: center;
    height: 33px;
    padding-left: 5px;
    background-color: #484d59;
    border-radius: 3px 3px 0 0;
}
.grip {
    width: 6px;
    height: 22px;
    background: radial-gradient(circle at 1px 1px, #dcdcdc 1px, transparent 1px) 0 0 / 4px 4px;
}
.command-line button {
    margin-left: 8px;
}
.command-line button + button {
    margin-left: 16px;
}
.command-box {
    display: flex;
    flex: 1;
    align-items: center;
    height: 33px;
    margin-left: 6px;
    padding: 0 5px;
    background-color: #dcdcdc;
    border: 1px solid #3b4453;
    border-radius: 3px;
}
.command-box .caret {
    margin: 0 10px 0 2px;
}
.command-box input {
    flex: 1;
    padding: 0;
    border: none;
    background: none;
    font: italic 15px "DejaVu Sans Mono", monospace;
}
.command-box input::placeholder {
    color: #777;
}
.history {
    width: 10px;
    height: 5px;
    background-color: #666;
    clip-path: polygon(50% 0, 100% 100%, 0 100%);
}

/* Status bar */
.status-tools {
    display: flex;
    gap: 3px;
    height: 29px;
    margin: 2px 0 0 auto;
}
.seg {
    display: flex;
    background-color: #3b4453;
}
.seg button {
    display: flex;
    justify-content: center;
    align-items: center;
    min-width: 31px;
}
.seg.tight button {
    min-width: 30px;
}
.seg .on {
    min-width: 28px;
    background-color: #5f8fc4;
}
.seg .drop {
    min-width: 20px;
}
.seg .divided {
    border-left: 1px solid #222933;
}
.seg .space {
    min-width: 52px;
}
```
